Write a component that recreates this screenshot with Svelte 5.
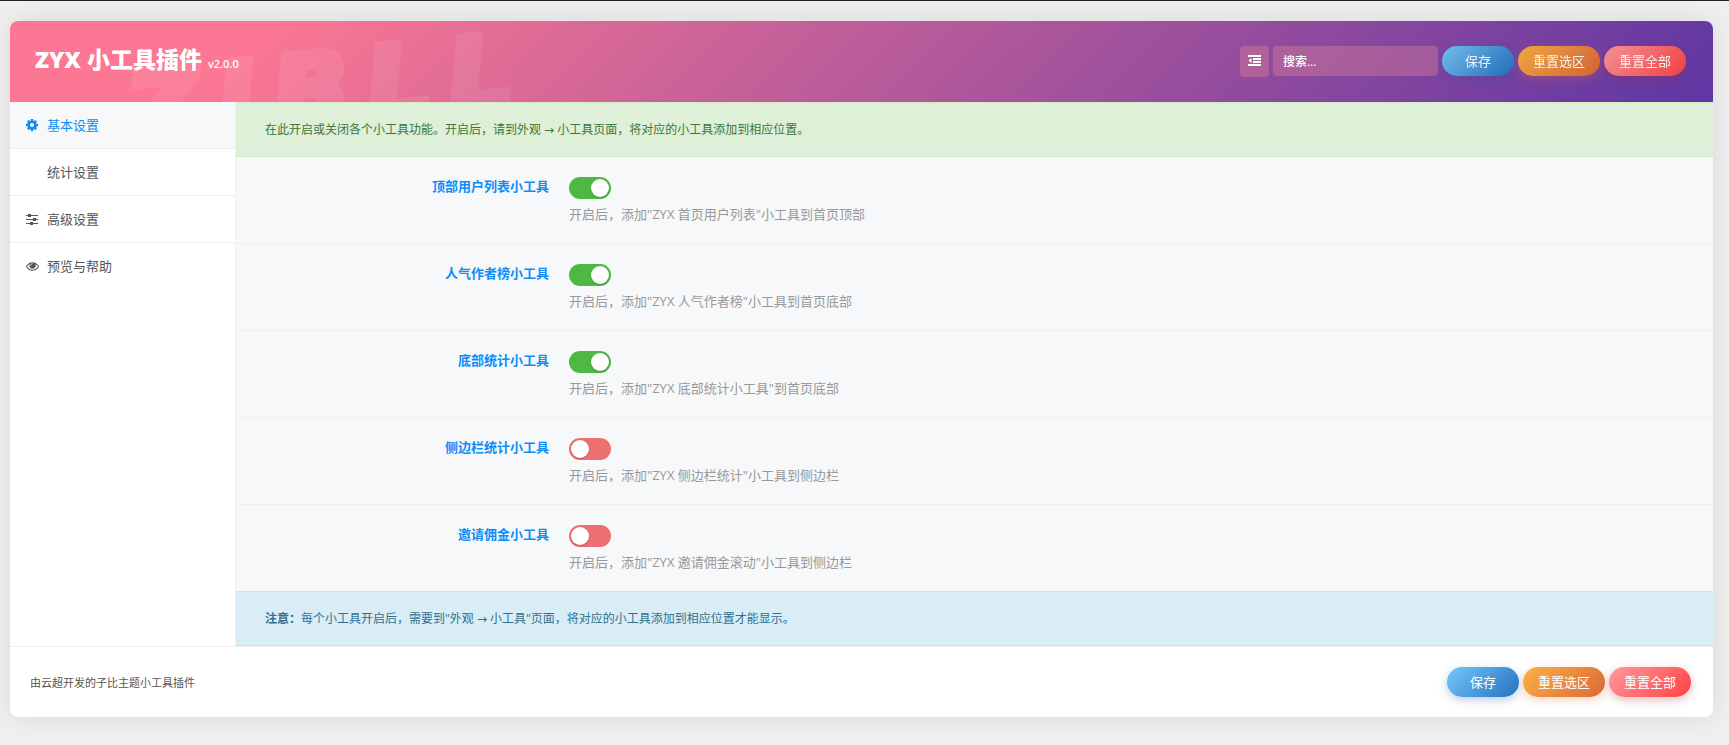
<script>
  let search = '';
  let active = 0;

  const menu = [
    { text: '基本设置', icon: 'cog' },
    { text: '统计设置', icon: '' },
    { text: '高级设置', icon: 'sliders' },
    { text: '预览与帮助', icon: 'eye' }
  ];

  let fields = [
    { id: 'top_users', title: '顶部用户列表小工具', desc: '开启后，添加"ZYX 首页用户列表"小工具到首页顶部', on: true },
    { id: 'hot_authors', title: '人气作者榜小工具', desc: '开启后，添加"ZYX 人气作者榜"小工具到首页底部', on: true },
    { id: 'footer_stats', title: '底部统计小工具', desc: '开启后，添加"ZYX 底部统计小工具"到首页底部', on: true },
    { id: 'sidebar_stats', title: '侧边栏统计小工具', desc: '开启后，添加"ZYX 侧边栏统计"小工具到侧边栏', on: false },
    { id: 'invite', title: '邀请佣金小工具', desc: '开启后，添加"ZYX 邀请佣金滚动"小工具到侧边栏', on: false }
  ];
</script>

{#snippet buttons()}
  <button type="submit" class="btn save">保存</button>
  <button type="button" class="btn reset-section">重置选区</button>
  <button type="button" class="btn reset-all">重置全部</button>
{/snippet}

<main>
  <form class="panel" on:submit|preventDefault>
    <header>
      <div class="watermark" aria-hidden="true">
        <span>Z</span><span>I</span><span>B</span><span>L</span><span>L</span>
      </div>
      <h1>ZYX 小工具插件 <small>v2.0.0</small></h1>
      <div class="tools">
        <button type="button" class="expand" aria-label="展开全部">
          <svg viewBox="0 0 13 11" width="13" height="11" fill="currentColor">
            <path d="M0 0h13v2H0zM5 3h8v2H5zM5 6h8v2H5zM0 9h13v2H0zM3.500 3v5L0.500 5.500z" />
          </svg>
        </button>
        <input type="text" placeholder="搜索..." aria-label="搜索" bind:value={search} />
        {@render buttons()}
      </div>
    </header>

    <div class="body">
      <nav>
        <ul>
          {#each menu as item, i}
            <li>
              <a href="#tab-{i + 1}" class:active={active === i} on:click={() => (active = i)}>
                <span class="icon">
                  {#if item.icon === 'cog'}
                    <svg viewBox="0 0 1536 1536" width="12" height="12" fill="currentColor">
                      <path d="M1024 768q0-106-75-181t-181-75-181 75-75 181 75 181 181 75 181-75 75-181zm512-109v222q0 12-8 23t-20 13l-185 28q-19 54-39 91 35 50 107 138 10 12 10 25t-9 23q-27 37-99 108t-94 71q-12 0-26-9l-138-108q-44 23-91 38-16 136-29 186-7 28-36 28H657q-14 0-24.500-8.500T621 1506l-28-184q-49-16-90-37l-141 107q-10 9-25 9-14 0-25-11-126-114-165-168-7-10-7-23 0-12 8-23 15-21 51-66.500t54-70.500q-27-50-41-99L29 913q-13-2-21-12.500T0 877V655q0-12 8-23t19-13l186-28q14-46 39-92-40-57-107-138-10-12-10-24 0-10 9-23 26-36 98.500-107.500T337 135q13 0 26 10l138 107q44-23 91-38 16-136 29-186 7-28 36-28h222q14 0 24.500 8.500T915 30l28 184q49 16 90 37l142-107q9-9 24-9 13 0 25 10 129 119 165 170 7 8 7 22 0 12-8 23-15 21-51 66.500t-54 70.500q26 50 41 98l183 28q13 2 21 12.500t8 23.500z" />
                    </svg>
                  {:else if item.icon === 'sliders'}
                    <svg viewBox="0 0 12 11" width="12" height="11" fill="currentColor">
                      <path d="M0 1h2v1H0zM5 1h7v1H5zM2 0h3v3H2zM0 5h7v1H0zM10 5h2v1h-2zM7 4h3v3H7zM0 9h4v1H0zM7 9h5v1H7zM4 8h3v3H4z" />
                    </svg>
                  {:else if item.icon === 'eye'}
                    <svg viewBox="0 0 1792 1152" width="13" height="9" fill="currentColor">
                      <path d="M1664 576q-152-236-381-353 61 104 61 225 0 185-131.500 316.500T896 896 579.500 764.500 448 448q0-121 61-225-229 117-381 353 133 205 333.500 326.500T896 1024t434.500-121.500T1664 576zM944 192q0-20-14-34t-34-14q-125 0-214.500 89.500T592 448q0 20 14 34t34 14 34-14 14-34q0-86 61-147t147-61q20 0 34-14t14-34zm848 384q0 34-20 69-140 230-376.500 368.500T896 1152t-499.500-139T20 645Q0 610 0 576t20-69q140-229 376.500-368T896 0t499.500 139T1772 507q20 35 20 69z" />
                    </svg>
                  {/if}
                </span>
                {item.text}
              </a>
            </li>
          {/each}
        </ul>
      </nav>

      <section>
        <div class="notice success">在此开启或关闭各个小工具功能。开启后，请到外观 → 小工具页面，将对应的小工具添加到相应位置。</div>
        {#each fields as field}
          <div class="field">
            <label class="title" for={field.id}>{field.title}</label>
            <div class="control">
              <input type="checkbox" role="switch" id={field.id} bind:checked={field.on} />
              <p>{field.desc}</p>
            </div>
          </div>
        {/each}
        <div class="notice info"><strong>注意：</strong>每个小工具开启后，需要到"外观 → 小工具"页面，将对应的小工具添加到相应位置才能显示。</div>
      </section>
    </div>

    <footer>
      <p>由云超开发的子比主题小工具插件</p>
      <div class="tools">
        {@render buttons()}
      </div>
    </footer>
  </form>
</main>

<style>
  :global(body) {
    background: #f0f0f1;
  }

  main {
    min-height: 100vh;
    box-sizing: border-box;
    padding: 20px 16px 28px 10px;
    border-top: 1px solid #1d2327;
    font-family: 'Open Sans', 'DejaVu Sans', 'Noto Sans CJK SC', sans-serif;
    font-size: 13px;
    color: #555;
  }

  .panel {
    border-radius: 8px;
    overflow: hidden;
    background: #fff;
    box-shadow: 0 0 30px rgba(0, 0, 0, 0.1);
  }

  header {
    position: relative;
    display: flex;
    justify-content: space-between;
    align-items: center;
    height: 81px;
    padding: 0 27px 0 25px;
    overflow: hidden;
    color: #fff;
    background: linear-gradient(135deg, #fb7793 15%, #5e36a3);
  }

  /* big faded brand text behind the title */
  .watermark {
    position: absolute;
    left: 117px;
    top: 20px;
    display: flex;
    gap: 18px;
    font-family: 'DejaVu Sans', sans-serif;
    font-size: 100px;
    font-style: italic;
    font-weight: 700;
    line-height: 100px;
    color: #fff;
    -webkit-text-stroke: 8px #fff;
    opacity: 0.08;
    transform: rotate(-6deg);
  }

  h1 {
    position: relative;
    margin: 0;
    font-size: 23px;
    line-height: 32px;
    font-weight: 800;
  }

  h1 small {
    font-size: 11px;
    font-weight: 600;
  }

  .tools {
    position: relative;
    display: flex;
    gap: 4px;
  }

  .expand {
    width: 29px;
    height: 31px;
    padding: 0 0 2px;
    border: 0;
    border-radius: 4px;
    color: #fff;
    background: rgba(247, 149, 148, 0.3);
    cursor: pointer;
  }

  .expand svg {
    display: block;
    margin: 0 auto;
  }

  input[type='text'] {
    box-sizing: border-box;
    width: 165px;
    height: 30px;
    padding: 0 10px;
    border: 0;
    border-radius: 4px;
    font-family: inherit;
    font-size: 12px;
    font-weight: 500;
    color: #fff;
    background: rgba(247, 149, 148, 0.3);
  }

  input[type='text']::placeholder {
    color: #fff;
    opacity: 1;
  }

  .btn {
    height: 30px;
    padding: 0 15px 2px;
    border: 0;
    border-radius: 15px;
    font-family: inherit;
    font-size: 13px;
    color: #fff;
    cursor: pointer;
  }

  .save {
    padding: 0 23px 2px;
    background: linear-gradient(135deg, #77c7fb, #2371be);
    box-shadow: 0 3px 10px rgba(35, 90, 160, 0.3);
  }

  .reset-section {
    background: linear-gradient(135deg, #fbb045, #dc6838);
    box-shadow: 0 3px 10px rgba(230, 110, 50, 0.3);
  }

  .reset-all {
    background: linear-gradient(135deg, #ff9a9c, #ff4245);
    box-shadow: 0 3px 10px rgba(160, 40, 50, 0.3);
  }

  header .btn {
    filter: brightness(0.95);
  }

  .body {
    display: flex;
  }

  nav {
    flex: 0 0 225px;
    border-right: 1px solid #f0f0f1;
  }

  ul {
    margin: 0;
    padding: 0;
    list-style: none;
  }

  li {
    border-bottom: 1px solid #eee;
  }

  li:last-child {
    border-bottom: 0;
  }

  nav a {
    display: flex;
    align-items: center;
    height: 44px;
    padding: 0 15px 2px;
    color: #555;
    text-decoration: none;
  }

  nav a.active {
    color: #0e8df6;
    background: #f6f8fa;
  }

  .icon {
    display: flex;
    justify-content: center;
    width: 14px;
    padding-top: 2px;
    margin-right: 8px;
  }

  section {
    flex: 1;
    min-width: 0;
    background: #f6f8fa;
  }

  .notice {
    padding: 17px 29px 16px;
    border-top: 1px solid;
    border-bottom: 1px solid;
    font-size: 12px;
    line-height: 20px;
  }

  .success {
    color: #3c763d;
    background: #dff0d8;
    border-color: #d6e9c6;
  }

  .info {
    color: #31708f;
    background: #d9edf7;
    border-color: #bce8f1;
  }

  .field {
    display: flex;
    padding: 20px 30px 19px 0;
    border-bottom: 1px solid #eceef0;
  }

  .field:nth-last-child(2) {
    border-bottom: 0;
  }

  .title {
    flex: 0 0 313px;
    margin-right: 20px;
    font-weight: 600;
    line-height: 18px;
    text-align: right;
    color: #0e8df6;
  }

  .control p {
    margin: 5px 0 0;
    line-height: 20px;
    color: #999;
  }

  input[type='checkbox'] {
    appearance: none;
    display: block;
    width: 42px;
    height: 22px;
    margin: 0;
    padding: 2px;
    box-sizing: border-box;
    border-radius: 11px;
    background: #ed6f6f;
    cursor: pointer;
  }

  input[type='checkbox']::before {
    content: '';
    display: block;
    width: 18px;
    height: 18px;
    border-radius: 50%;
    background: #fff;
    box-shadow: 0 1px 2px rgba(0, 0, 0, 0.2);
  }

  input[type='checkbox']:checked {
    background: #4fb845;
  }

  input[type='checkbox']:checked::before {
    margin-left: 20px;
  }

  footer {
    display: flex;
    justify-content: space-between;
    align-items: center;
    padding: 20px 22px 20px 20px;
    border-top: 1px solid #eee;
  }

  footer p {
    margin: 0;
    font-size: 11px;
  }
</style>
